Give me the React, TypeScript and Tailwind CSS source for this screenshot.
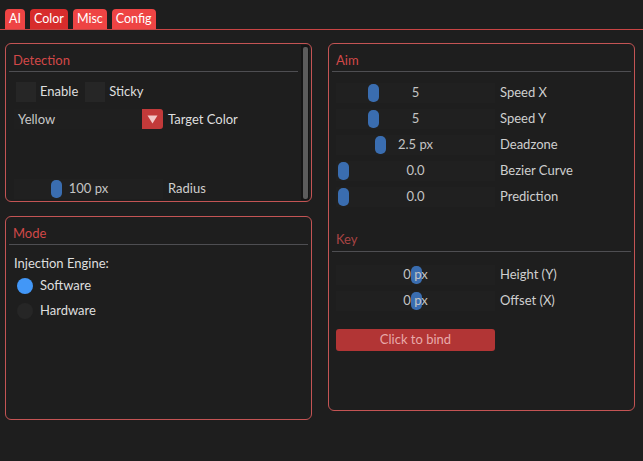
import React from 'react';

const FONT = { fontFamily: 'Lato, "Open Sans", sans-serif' };

function Panel({ title, className, children, scroll }: { title: string; className: string; children: React.ReactNode; scroll?: boolean }) {
  return (
    <div className={`relative rounded-[6px] border border-[#c45454] ${className}`}>
      <div className="flex h-full">
        <div className="flex-1 px-[3px]">
          <div className="h-[27px] pl-[4px] pt-[8px] text-[13px] leading-[16px] text-[#d24848]">{title}</div>
          <div className="h-px bg-[#4e4e52]" />
          {children}
        </div>
        {scroll && (
          <div className="my-[1px] mr-[2px] w-[8px] bg-[#151515] p-[1.5px]">
            <div className="h-full rounded-[2px] bg-[#5c5c5c]" />
          </div>
        )}
      </div>
    </div>
  );
}

function Slider({ value, label, thumb, width = 159 }: { value: string; label: string; thumb: number; width?: number }) {
  return (
    <div className="flex h-[20px] items-center">
      <div className="relative h-[20px] bg-[#202020]" style={{ width }}>
        <div className="absolute top-[1px] h-[18px] w-[11px] rounded-[5px] bg-[#3a6db0]" style={{ left: thumb }} />
        <div className="relative flex h-full items-center justify-center text-[13px] text-[#c4c4c4]">{value}</div>
      </div>
      <span className="ml-[5px] text-[13px] text-[#cfcfcf]">{label}</span>
    </div>
  );
}

export default function App() {
  const tabs = [
    { name: 'AI', active: false },
    { name: 'Color', active: true },
    { name: 'Misc', active: false },
    { name: 'Config', active: false },
  ];
  return (
    <div className="h-[461px] w-[643px] overflow-hidden bg-[#1e1e1e] text-[#dedede]" style={FONT}>
      <div className="flex h-[29px] items-end gap-[5px] pl-[5px]">
        {tabs.map((t) => (
          <div
            key={t.name}
            className={`flex h-[20px] items-center rounded-t-[4px] px-[4px] text-[12.5px] text-white ${t.active ? 'bg-[#d72c2c]' : 'bg-[#ee4444]'}`}
          >
            {t.name}
          </div>
        ))}
      </div>
      <div className="h-px bg-[#c84444]" />
      <div className="flex gap-[16px] px-[5px] pt-[13px]">
        <div className="flex w-[307px] flex-col gap-[14px]">
          <Panel title="Detection" className="h-[159px]" scroll>
            <div className="flex h-[20px] items-center pl-[7px] mt-[10px] text-[13px]">
              <div className="h-[20px] w-[20px] bg-[#262626]" />
              <span className="ml-[4px]">Enable</span>
              <div className="ml-[7px] h-[20px] w-[20px] bg-[#262626]" />
              <span className="ml-[4px]">Sticky</span>
            </div>
            <div className="mt-[7px] flex h-[20px] items-center pl-[5px] text-[13px]">
              <div className="flex h-[20px] w-[128px] items-center bg-[#1f1f1f] pl-[4px] pt-[1px] text-[#c8c8c8]">Yellow</div>
              <div className="flex h-[20px] w-[21px] items-center justify-center rounded-r-[3px] bg-[#c23a3a]">
                <svg width="11" height="9" viewBox="0 0 11 9">
                  <path d="M0.5 0.5 L10.5 0.5 L5.5 8.5 Z" fill="#f2c8c8" />
                </svg>
              </div>
              <span className="ml-[5px] pt-[1px]">Target Color</span>
            </div>
            <div className="mt-[50px] pl-[5px]">
              <Slider value="100 px" label="Radius" thumb={37} width={149} />
            </div>
          </Panel>
          <Panel title="Mode" className="h-[204px]">
            <div className="pl-[5px] pt-[10px] text-[13px]">
              <div className="h-[16px] leading-[16px]">Injection Engine:</div>
              <div className="mt-[7px] flex h-[16px] items-center pl-[3px]">
                <div className="h-[16px] w-[16px] rounded-full bg-[#4297f7]" />
                <span className="ml-[7px]">Software</span>
              </div>
              <div className="mt-[9px] flex h-[16px] items-center pl-[3px]">
                <div className="h-[16px] w-[16px] rounded-full bg-[#262626]" />
                <span className="ml-[7px]">Hardware</span>
              </div>
            </div>
          </Panel>
        </div>
        <Panel title="Aim" className="h-[368px] w-[307px]">
          <div className="flex flex-col gap-[6px] pl-[4px] pt-[11px]">
            <Slider value="5" label="Speed X" thumb={32} />
            <Slider value="5" label="Speed Y" thumb={32} />
            <Slider value="2.5 px" label="Deadzone" thumb={39} />
            <Slider value="0.0" label="Bezier Curve" thumb={2} />
            <Slider value="0.0" label="Prediction" thumb={2} />
          </div>
          <div className="h-[24px]" />
          <div className="h-[20px] pl-[4px] text-[13px] leading-[16px] text-[#a84444]">Key</div>
          <div className="h-px bg-[#4e4e52]" />
          <div className="flex flex-col gap-[6px] pl-[4px] pt-[13px]">
            <Slider value="0 px" label="Height (Y)" thumb={75} />
            <Slider value="0 px" label="Offset (X)" thumb={75} />
          </div>
          <div className="ml-[4px] mt-[18px] flex h-[22px] w-[159px] items-center justify-center rounded-[3px] bg-[#b23535] text-[13px] text-[#e8aaaa]">
            Click to bind
          </div>
        </Panel>
      </div>
    </div>
  );
}
